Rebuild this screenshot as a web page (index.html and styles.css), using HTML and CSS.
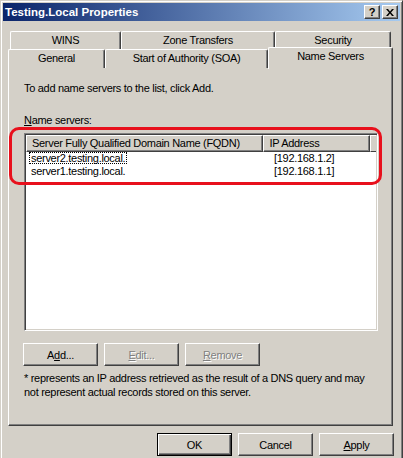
FILE: index.html
```html
<!DOCTYPE html>
<html lang="en">
<head>
    <meta charset="UTF-8">
    <title>Testing.Local Properties</title>
    <link rel="stylesheet" href="styles.css">
</head>
<body>

<div class="window">
    <!-- Title bar -->
    <div class="titlebar">
        <span class="title">Testing.Local Properties</span>
        <div class="caption-buttons">
            <button class="caption-btn">?</button>
            <button class="caption-btn close">
                <svg width="8" height="7" viewBox="0 0 8 7"><path d="M0 0h2l2 2.5L6 0h2L5 3.5 8 7H6L4 4.5 2 7H0l3-3.5z" fill="#000"/></svg>
            </button>
        </div>
    </div>

    <!-- Tabs -->
    <div class="tab-row back">
        <div class="tab" style="width:111px">WINS</div>
        <div class="tab" style="width:154px">Zone Transfers</div>
        <div class="tab" style="width:116px">Security</div>
    </div>
    <div class="tab-row front">
        <div class="tab" style="width:97px">General</div>
        <div class="tab" style="width:163px">Start of Authority (SOA)</div>
        <div class="tab selected" style="width:125px">Name Servers</div>
    </div>

    <!-- Tab panel -->
    <div class="panel">
        <p class="intro">To add name servers to the list, click Add.</p>
        <p class="list-label"><u>N</u>ame servers:</p>

        <div class="listview">
            <div class="lv-header">
                <div class="lv-col col-name">Server Fully Qualified Domain Name (FQDN)</div>
                <div class="lv-col col-ip">IP Address</div>
                <div class="lv-col col-rest"></div>
            </div>
            <div class="lv-row">
                <div class="col-name"><span class="focused">server2.testing.local.</span></div>
                <div class="col-ip">[192.168.1.2]</div>
            </div>
            <div class="lv-row">
                <div class="col-name"><span>server1.testing.local.</span></div>
                <div class="col-ip">[192.168.1.1]</div>
            </div>
        </div>

        <div class="button-row">
            <button class="btn">A<u>d</u>d...</button>
            <button class="btn" disabled><u>E</u>dit...</button>
            <button class="btn" disabled><u>R</u>emove</button>
        </div>

        <p class="note">* represents an IP address retrieved as the result of a DNS query and may not represent actual records stored on this server.</p>
    </div>

    <!-- Dialog buttons -->
    <div class="dialog-buttons">
        <button class="btn default">OK</button>
        <button class="btn">Cancel</button>
        <button class="btn"><u>A</u>pply</button>
    </div>

    <!-- red highlight drawn over the list -->
    <div class="highlight"></div>
</div>

</body>
</html>
```

FILE: styles.css
```css
/* Classic dialog look */
body {
    margin: 0;
    padding: 0;
    overflow: hidden;
    background: #d4d0c8;
    font-family: "Liberation Sans", Arial, sans-serif;
    font-size: 11px;
    letter-spacing: -0.3px;
    color: #000;
}

.window {
    position: relative;
    width: 403px;
    height: 470px;
    box-sizing: border-box;
    padding: 2px;
    background-color: #d4d0c8;
    border: 1px solid;
    border-color: #d4d0c8 #404040 #404040 #d4d0c8;
    box-shadow: inset 1px 1px #fff, inset -1px -1px #808080;
}

/* Title bar */
.titlebar {
    display: flex;
    align-items: center;
    justify-content: space-between;
    height: 18px;
    padding: 0 2px 0 2px;
    background: linear-gradient(to right, #0a246a, #a6caf0);
}

.title {
    color: #fff;
    font-weight: bold;
    font-size: 11.5px;
    letter-spacing: 0;
}

.caption-buttons {
    display: flex;
    gap: 2px;
}

.caption-btn {
    width: 16px;
    height: 14px;
    padding: 0;
    display: flex;
    align-items: center;
    justify-content: center;
    background: #d4d0c8;
    border: 1px solid;
    border-color: #fff #404040 #404040 #fff;
    box-shadow: inset -1px -1px #808080;
    font-family: "Liberation Sans", Arial, sans-serif;
    font-weight: bold;
    font-size: 11px;
    line-height: 12px;
    color: #000;
}

/* Tabs */
.tab-row {
    display: flex;
    height: 18px;
}

.tab-row.back {
    margin-top: 10px;
    margin-left: 7px;
}

.tab-row.front {
    margin-left: 5px;
    position: relative;
    z-index: 1;
}

.tab {
    box-sizing: border-box;
    height: 19px;
    border: 1px solid #fff;
    border-right-color: #404040;
    border-bottom: none;
    border-radius: 2px 2px 0 0;
    box-shadow: inset -1px 0 #808080;
    background: #d4d0c8;
    text-align: center;
    line-height: 17px;
}

.tab.selected {
    height: 22px;
    margin-top: -2px;
    line-height: 16px;
}

/* Panel */
.panel {
    position: relative;
    margin-left: 5px;
    width: 385px;
    height: 359px;
    box-sizing: border-box;
    padding: 0 15px;
    border: 1px solid;
    border-color: #fff #404040 #404040 #fff;
    box-shadow: inset -1px -1px #808080;
}

.intro {
    margin: 14px 0 0 0;
    line-height: 13px;
}

.list-label {
    margin: 19px 0 0 0;
    line-height: 13px;
}

.listview {
    margin-top: 6px;
    width: 354px;
    height: 198px;
    box-sizing: border-box;
    background: #fff;
    border: 1px solid;
    border-color: #808080 #fff #fff #808080;
    box-shadow: inset 1px 1px #404040, inset -1px -1px #d4d0c8;
    padding: 1px;
}

.lv-header {
    display: flex;
    height: 17px;
}

.lv-col {
    box-sizing: border-box;
    height: 17px;
    background: #d4d0c8;
    border: 1px solid;
    border-color: #fff #404040 #404040 #fff;
    box-shadow: inset -1px -1px #808080;
    line-height: 14px;
    padding-left: 5px;
    white-space: nowrap;
    overflow: hidden;
}

.lv-header .col-name { width: 243px; }
.lv-header .col-ip { width: 109px; }
.lv-header .col-rest { flex: 1; border-right: none; box-shadow: none; }

.lv-row {
    display: flex;
    height: 13px;
    line-height: 13px;
}

.lv-row:first-of-type {
    margin-top: 0;
}

.lv-row .col-name {
    width: 243px;
    padding-left: 3px;
    box-sizing: border-box;
}

.lv-row .col-ip {
    padding-left: 5px;
}

.lv-row span {
    padding: 0 2px;
}

.focused {
    outline: 1px dotted #000;
    outline-offset: -1px;
}

/* Buttons */
.button-row {
    display: flex;
    gap: 6px;
    margin-top: 12px;
    margin-left: -1px;
}

.btn {
    width: 75px;
    height: 23px;
    padding: 0;
    background: #d4d0c8;
    border: 1px solid;
    border-color: #fff #404040 #404040 #fff;
    box-shadow: inset -1px -1px #808080;
    font-family: "Liberation Sans", Arial, sans-serif;
    font-size: 11px;
    letter-spacing: -0.3px;
    color: #000;
}

.btn:disabled {
    color: #808080;
    text-shadow: 1px 1px #fff;
}

.btn.default {
    border: 1px solid #000;
    box-shadow: inset 1px 1px #fff, inset -1px -1px #404040, inset -2px -2px #808080;
}

.note {
    margin: 5px 0 0 0;
    line-height: 14px;
}

.dialog-buttons {
    display: flex;
    justify-content: flex-end;
    gap: 6px;
    margin-top: 7px;
    margin-right: 6px;
}

/* Red annotation ring */
.highlight {
    position: absolute;
    left: 8px;
    top: 126px;
    width: 373px;
    height: 58px;
    box-sizing: border-box;
    border: 3px solid #e8101c;
    border-radius: 10px;
    pointer-events: none;
}
```
